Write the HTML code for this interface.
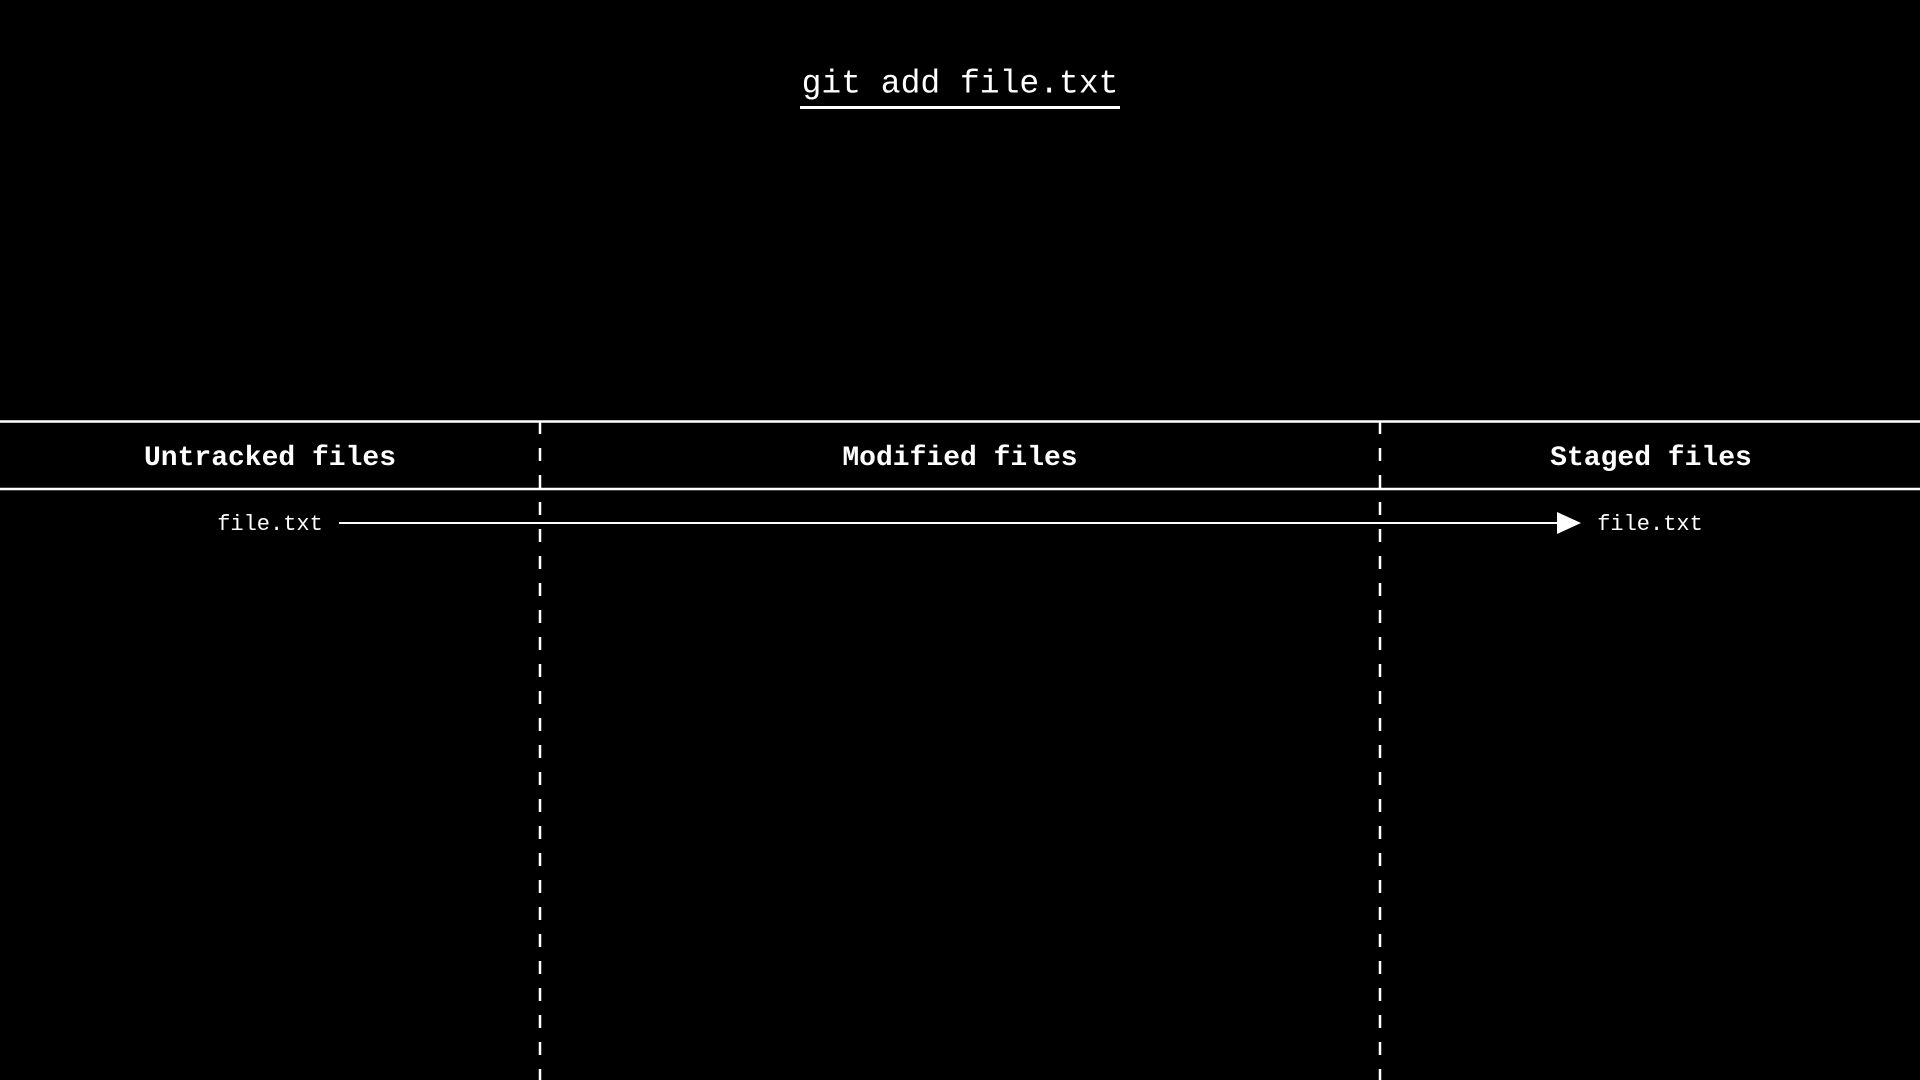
<!DOCTYPE html>
<html><head><meta charset="utf-8"><style>
html,body{margin:0;padding:0;background:#000;width:1920px;height:1080px;overflow:hidden}
body{position:relative;font-family:"Liberation Mono",monospace;color:#fff}
.t{position:absolute;white-space:nowrap;transform:translate(-50%,-50%);line-height:1}
.h{font-weight:bold;font-size:28px}
.f{font-size:22px}
</style></head><body>
<div class="t" style="left:960px;top:84px;font-size:33px">git add file.txt</div>
<div style="position:absolute;left:800px;top:106px;width:320px;height:3px;background:#fff"></div>
<svg width="1920" height="1080" style="position:absolute;left:0;top:0">
<line x1="0" y1="421.5" x2="1920" y2="421.5" stroke="#fff" stroke-width="2.5"/>
<line x1="0" y1="489" x2="1920" y2="489" stroke="#fff" stroke-width="2.5"/>
<line x1="540" y1="421" x2="540" y2="1080" stroke="#fff" stroke-width="2.5" stroke-dasharray="13 14"/>
<line x1="1380" y1="421" x2="1380" y2="1080" stroke="#fff" stroke-width="2.5" stroke-dasharray="13 14"/>
<line x1="339" y1="523" x2="1560" y2="523" stroke="#fff" stroke-width="2"/>
<polygon points="1557,512 1581,523 1557,534" fill="#fff"/>
</svg>
<div class="t h" style="left:270px;top:459px">Untracked files</div>
<div class="t h" style="left:960px;top:459px">Modified files</div>
<div class="t h" style="left:1651px;top:459px">Staged files</div>
<div class="t f" style="left:270px;top:525px">file.txt</div>
<div class="t f" style="left:1650px;top:525px">file.txt</div>
</body></html>
